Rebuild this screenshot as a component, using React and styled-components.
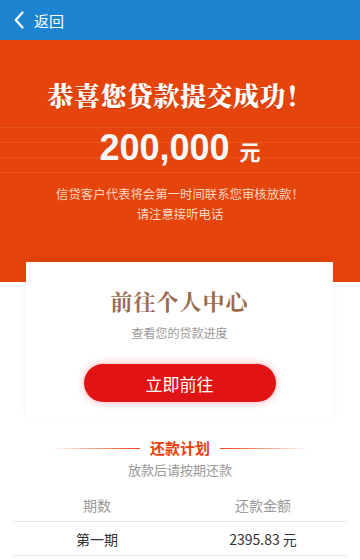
import React from "react";
import styled, { createGlobalStyle } from "styled-components";

const GlobalStyle = createGlobalStyle`
  * { box-sizing: border-box; }
  body {
    margin: 0;
    background: #fff;
    font-family: "Noto Sans CJK SC", "Noto Sans", sans-serif;
  }
`;

const plans = [{ name: "第一期", amount: "2395.83 元" }];

const App = () => {
  return (
    <Page>
      <GlobalStyle />
      <TopBar>
        <BackIcon viewBox="0 0 10 18">
          <path d="M8.5 1.5 L1.8 9 L8.5 16.5" fill="none" stroke="#fff" strokeWidth="2.2" strokeLinecap="round" strokeLinejoin="round" />
        </BackIcon>
        <BackText>返回</BackText>
      </TopBar>

      <Hero>
        <HeroTitle>恭喜您贷款提交成功！</HeroTitle>
        <Amount>
          200,000<Unit>元</Unit>
        </Amount>
        <HeroNote>
          信贷客户代表将会第一时间联系您审核放款！
          <br />
          请注意接听电话
        </HeroNote>
      </Hero>

      <Card>
        <CardTitle>前往个人中心</CardTitle>
        <CardSub>查看您的贷款进度</CardSub>
        <GoButton>立即前往</GoButton>
      </Card>

      <Plan>
        <PlanHead>
          <PlanLine />
          <PlanTitle>还款计划</PlanTitle>
          <PlanLine $right />
        </PlanHead>
        <PlanSub>放款后请按期还款</PlanSub>

        <Table>
          <HeadRow>
            <Cell>期数</Cell>
            <Cell>还款金额</Cell>
          </HeadRow>
          {plans.map((p) => (
            <Row key={p.name}>
              <Cell>{p.name}</Cell>
              <Cell>{p.amount}</Cell>
            </Row>
          ))}
        </Table>
      </Plan>
    </Page>
  );
};

export default App;

const Page = styled.div`
  width: 360px;
  min-height: 560px;
  background: #fff;
  overflow: hidden;
`;

const TopBar = styled.div`
  height: 40px;
  background: #1c83d1;
  display: flex;
  align-items: center;
  padding-left: 14px;
  gap: 10px;
`;

const BackIcon = styled.svg`
  width: 10px;
  height: 18px;
`;

const BackText = styled.span`
  color: #fff;
  font-size: 15px;
`;

const stripe = (y) => `
  transparent ${y}px,
  rgba(255, 255, 255, 0.09) ${y}px,
  rgba(255, 255, 255, 0.09) ${y + 1}px,
  transparent ${y + 1}px`;

const Hero = styled.div`
  height: 242px;
  padding-top: 36px;
  background-color: #e5440a;
  background-image: linear-gradient(
    to bottom,
    ${stripe(87)},
    ${stripe(102)},
    ${stripe(117)},
    ${stripe(132)}
  );
  text-align: center;
  color: #fff;
`;

const HeroTitle = styled.h1`
  margin: 0;
  font-family: "Noto Serif CJK SC", "Noto Sans CJK SC", serif;
  font-size: 26px;
  line-height: 38px;
  font-weight: 900;
  letter-spacing: 0.5px;
  text-shadow: 0 1px 1px rgba(0, 0, 0, 0.15);
`;

const Amount = styled.div`
  margin-top: 12px;
  font-family: "Liberation Sans", Arial, sans-serif;
  font-size: 36px;
  line-height: 44px;
  font-weight: 700;
  color: #f6f8fb;
`;

const Unit = styled.span`
  margin-left: 10px;
  font-family: "Noto Sans CJK SC", sans-serif;
  font-size: 21px;
  font-weight: 700;
`;

const HeroNote = styled.p`
  margin: 11px 0 0;
  font-size: 12.4px;
  line-height: 20px;
  color: #fbd6c6;
`;

const Card = styled.div`
  width: 307px;
  margin: -20px 0 0 26px;
  position: relative;
  background: #fff;
  padding: 22px 0 20px;
  text-align: center;
  box-shadow: 0 -4px 10px -2px rgba(0, 0, 0, 0.07);
`;

const CardTitle = styled.div`
  font-family: "Noto Serif CJK SC", "Noto Sans CJK SC", serif;
  font-size: 22px;
  line-height: 34px;
  font-weight: 700;
  color: #9a6c4e;
  letter-spacing: 1px;
`;

const CardSub = styled.div`
  margin-top: 6px;
  font-size: 12px;
  line-height: 18px;
  color: #999;
`;

const GoButton = styled.button`
  display: block;
  margin: 22px auto 0;
  width: 192px;
  height: 38px;
  border: none;
  border-radius: 19px;
  background: #e01414;
  color: #fff;
  font-family: "Noto Sans CJK SC", sans-serif;
  font-size: 17px;
  box-shadow: 0 0 8px rgba(224, 20, 20, 0.35);
`;

const Plan = styled.div`
  padding: 16px 14px 0;
  text-align: center;
`;

const PlanHead = styled.div`
  display: flex;
  align-items: center;
  justify-content: center;
  gap: 10px;
`;

const PlanLine = styled.span`
  width: 90px;
  height: 1px;
  background: linear-gradient(
    ${(p) => (p.$right ? "to left" : "to right")},
    rgba(232, 64, 12, 0),
    #e8400c
  );
`;

const PlanTitle = styled.span`
  font-size: 15px;
  line-height: 20px;
  font-weight: 700;
  color: #e8400c;
`;

const PlanSub = styled.div`
  margin-top: 3px;
  font-size: 13px;
  line-height: 18px;
  color: #999;
`;

const Table = styled.div`
  margin-top: 9px;
`;

const HeadRow = styled.div`
  display: grid;
  grid-template-columns: 1fr 1fr;
  height: 34px;
  align-items: center;
  font-size: 14px;
  color: #999;
  border-bottom: 1px solid #e6e6e6;
`;

const Row = styled(HeadRow)`
  color: #333;
`;

const Cell = styled.div`
  text-align: center;
`;
